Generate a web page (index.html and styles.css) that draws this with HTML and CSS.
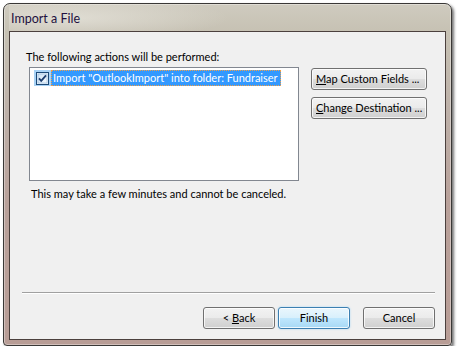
FILE: index.html
```html
<!DOCTYPE html>
<html>
<head>
<meta charset="utf-8">
<title>Import a File</title>
<link rel="stylesheet" href="styles.css">
</head>
<body>
<div class="window">
  <div class="titlebar"><span class="title">Import a File</span></div>
  <div class="client">
    <div class="label">The following actions will be performed:</div>
    <div class="content">
      <div class="list">
        <div class="item">
          <span class="cbcell">
            <svg class="cb" width="13" height="13" viewBox="0 0 13 13">
              <defs>
                <linearGradient id="cbg" x1="0" y1="0" x2="1" y2="1">
                  <stop offset="0" stop-color="#cfe4f6"/>
                  <stop offset="1" stop-color="#f4f9fd"/>
                </linearGradient>
              </defs>
              <rect x="0.5" y="0.5" width="12" height="12" fill="#e8f2fb" stroke="#1c4a78"/>
              <rect x="2" y="2" width="9" height="9" fill="url(#cbg)" stroke="#8fb4d8" stroke-width="0.6"/>
              <path d="M3 6.4 L5.2 8.8 L10 3.4" fill="none" stroke="#1d3f70" stroke-width="1.8" stroke-linejoin="miter"/>
            </svg>
          </span>
          <span class="itemtext">Import "OutlookImport" into folder: Fundraiser</span>
        </div>
      </div>
      <div class="side">
        <button class="btn sbtn"><u>M</u>ap Custom Fields ...</button>
        <button class="btn sbtn"><u>C</u>hange Destination ...</button>
      </div>
    </div>
    <div class="note">This may take a few minutes and cannot be canceled.</div>
    <div class="sep"></div>
    <div class="footer">
      <button class="btn fbtn back">&lt; <u>B</u>ack</button>
      <button class="btn fbtn finish default">Finish</button>
      <button class="btn fbtn">Cancel</button>
    </div>
  </div>
</div>
</body>
</html>
```
FILE: styles.css
```css
* { box-sizing: border-box; }
body {
  margin: 0;
  background: #ffffff;
  font-family: Lato, "Liberation Sans", sans-serif;
  font-size: 11px;
  color: #000;
}
.window {
  margin: 3px 0 0 3px;
  width: 449px;
  height: 343px;
  border: 1px solid #3a3836;
  border-radius: 7px 7px 4px 4px;
  padding: 0 5px 5px 5px;
  display: flex;
  flex-direction: column;
  background: linear-gradient(to bottom, #cfcbbf 0, #c6c1b3 28px, #bdb0a8 110px, #b9a19a 200px, #b89d96 100%);
  box-shadow: 2px 2px 3px rgba(0,0,0,0.55), inset 0 0 0 1px rgba(255,255,255,0.35);
}
.titlebar {
  height: 27px;
  display: flex;
  align-items: center;
  padding-left: 2px;
  background: radial-gradient(ellipse 160px 22px at 60px 14px, rgba(232,230,222,0.7), rgba(232,230,222,0) 100%);
}
.title {
  font-size: 12.5px;
  color: #221040;
  line-height: 15px;
  padding-top: 1px;
}
.client {
  flex: 1;
  border: 1px solid #4b403d;
  background: #f0f0f0;
  display: flex;
  flex-direction: column;
}
.label {
  margin: 17px 0 0 16px;
  line-height: 15px;
  color: #000;
}
.content {
  display: flex;
  margin-top: 3px;
}
.list {
  margin-left: 19px;
  width: 270px;
  height: 114px;
  border: 1px solid #828790;
  background: #fff;
  padding: 2px 0 0 4px;
}
.item {
  display: flex;
  height: 16px;
}
.cbcell {
  width: 17px;
  height: 16px;
  background: #a9d3f6;
  display: flex;
  align-items: center;
  justify-content: center;
  padding-right: 1px;
}
.cb { display: block; }
.itemtext {
  min-width: 230px;
  height: 16px;
  line-height: 14px;
  background: #3399ff;
  color: #fff;
  border: 1px dotted #f0a048;
  padding-left: 1px;
  white-space: nowrap;
}
.side {
  margin-left: 12px;
  margin-top: 1px;
  display: flex;
  flex-direction: column;
  gap: 7px;
}
.btn {
  font-family: Lato, "Liberation Sans", sans-serif;
  font-size: 11px;
  color: #000;
  height: 22px;
  border: 1px solid #707070;
  border-radius: 3px;
  background: linear-gradient(to bottom, #f2f2f2 0%, #ebebeb 48%, #dddddd 52%, #cfcfcf 100%);
  box-shadow: inset 0 0 0 1px rgba(255,255,255,0.75);
  padding: 0;
  margin: 0;
  line-height: 18px;
}
.sbtn {
  width: 116px;
  text-align: left;
  padding-left: 4px;
}
.note {
  margin: 5px 0 0 21px;
  line-height: 15px;
}
.sep {
  margin: auto 10px 0 12px;
  border-top: 1px solid #a0a0a0;
  border-bottom: 1px solid #ffffff;
}
.footer {
  display: flex;
  justify-content: flex-end;
  margin-top: 13px;
  padding: 0 10px 10px 0;
}
.fbtn {
  width: 72px;
  text-align: center;
}
.back { margin-right: 3px; }
.finish { margin-right: 13px; }
.default {
  border-color: #3c7fb1;
  background: linear-gradient(to bottom, #eaf6fd 0%, #d9f0fc 48%, #bee6fd 52%, #a7d9f5 100%);
  box-shadow: inset 0 0 0 1px rgba(255,255,255,0.8), 0 0 2px #9fd5f5;
}
```
